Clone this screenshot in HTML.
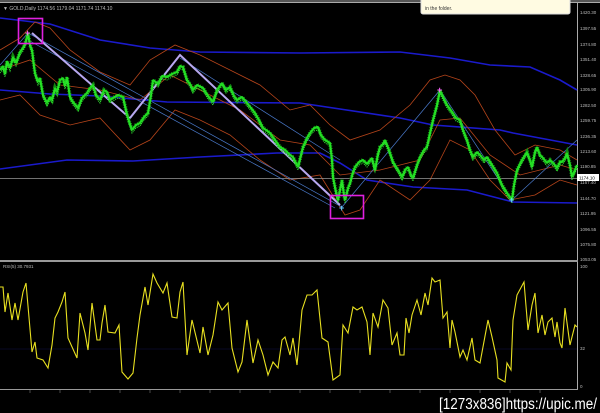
<!DOCTYPE html>
<html><head><meta charset="utf-8"><style>
html,body{margin:0;padding:0;background:#000;width:600px;height:413px;overflow:hidden}
svg{display:block}
text{font-family:"Liberation Sans",sans-serif}
</style></head><body>
<svg width="600" height="413" viewBox="0 0 600 413" xmlns="http://www.w3.org/2000/svg">
<defs>
<polyline id="pr" points="0,70 3,66 5,74 7,61 10,68 13,57 16,63 20,52 23,48 25,44 28,33 30,45 32,50 34,66 35,73 38,82 40,78 43,95 47,103 50,97 52,100 55,88 57,92 60,80 63,78 65,86 67,77 70,97 73,102 78,108 82,98 87,93 90,88 93,85 96,95 100,100 104,90 107,92 110,100 113,98 118,95 123,97 126,110 128,118 132,130 136,125 140,123 144,117 148,113 151,95 153,80 158,84 162,76 167,77 172,74 177,72 180,66 183,67 187,80 190,84 193,90 197,85 203,88 208,96 213,102 217,90 222,83 226,90 230,87 234,96 237,100 242,97 247,103 251,108 255,113 259,120 263,128 266,130 270,133 275,140 280,147 285,150 290,155 293,157 296,163 298,167 301,155 303,147 307,138 310,133 314,128 318,127 321,135 325,140 330,143 332,160 333,177 336,192 338,200 340,190 342,180 344,195 345,200 348,188 350,183 353,172 355,167 359,162 363,160 367,164 372,158 375,170 378,154 380,147 383,144 385,140 389,150 393,162 398,170 402,177 405,170 408,167 411,175 413,178 417,165 420,157 424,150 427,147 430,133 433,120 437,105 440,90 443,97 447,105 452,112 456,118 460,120 463,130 467,140 470,150 473,157 477,152 480,155 484,160 487,157 492,165 497,173 502,185 507,193 512,200 514,185 517,170 522,160 527,152 530,160 532,167 535,152 537,147 540,155 543,158 547,163 550,160 554,164 557,168 560,162 562,162 565,158 567,153 570,165 572,177 575,170 577,165"/>
</defs>
<rect width="600" height="413" fill="#000"/>
<rect x="0" y="0" width="600" height="2" fill="#555"/>
<rect x="0" y="2" width="600" height="1" fill="#aaa"/>
<text x="3" y="10" font-size="5" fill="#bbb">▼ GOLD,Daily 1174.56 1179.04 1171.74 1174.10</text>
<line x1="577.5" y1="3" x2="577.5" y2="390" stroke="#aaa" stroke-width="1"/>
<g font-size="4.5" fill="#bbb">
<text x="580" y="14">1420.30</text><text x="580" y="30">1397.55</text><text x="580" y="46">1374.80</text><text x="580" y="61">1351.40</text><text x="580" y="77">1328.65</text><text x="580" y="91">1305.90</text><text x="580" y="107">1282.50</text><text x="580" y="122">1259.75</text><text x="580" y="138">1236.35</text><text x="580" y="153">1213.60</text><text x="580" y="168">1190.85</text><text x="580" y="184">1167.40</text><text x="580" y="200">1144.70</text><text x="580" y="215">1121.95</text><text x="580" y="231">1096.55</text><text x="580" y="246">1075.80</text><text x="580" y="261">1053.05</text>
<text x="580" y="268">100</text><text x="580" y="350">32</text><text x="580" y="388">0</text>
</g>
<g fill="none" stroke="#1a1acc" stroke-width="1.6">
<polyline points="0,18 50,24 100,40 150,48 200,52 300,53 400,52 450,58 490,65 530,67 560,80 577,90"/>
<polyline points="0,90 50,94 100,96 167,102 300,103 400,118 433,125 500,130 513,133 577,145"/>
<polyline points="0,169 67,160 133,161 200,157 277,153 320,153 340,163 367,180 413,187 467,190 513,202 577,203"/>
</g>
<g fill="none" stroke="#b5441a" stroke-width="0.8">
<polyline points="0,50 20,38 35,22 50,28 70,50 100,72 130,85 150,60 175,45 200,55 230,70 260,85 290,110 310,105 330,125 350,140 380,130 410,105 430,80 445,75 460,80 475,95 495,130 515,155 535,145 560,150 577,160"/>
<polyline points="0,100 20,95 40,115 70,125 100,118 130,150 150,140 175,110 200,120 230,135 260,160 290,180 320,175 345,215 360,210 380,180 410,200 430,180 450,140 470,150 490,180 510,200 535,195 560,180 577,185"/>
<polyline points="0,70 30,60 60,85 100,90 140,100 170,75 200,90 240,110 280,140 310,145 340,175 380,170 420,160 440,120 460,118 490,155 520,175 560,165 577,170"/>
</g>
<line x1="0" y1="178.5" x2="577" y2="178.5" stroke="#999" stroke-width="0.8"/>
<rect x="577" y="174" width="22" height="7" fill="#fff"/>
<text x="579" y="179.5" font-size="4.5" fill="#000">1174.10</text>
<g fill="none" stroke="#4a7acc" stroke-width="0.7">
<polyline points="0,65 28,33 342,207 440,90 512,200 577,140"/>
<line x1="28" y1="40" x2="335" y2="208"/>
<line x1="180" y1="58" x2="340" y2="160"/>
</g>
<polyline points="32,33 130,118 180,55 340,205" fill="none" stroke="#b8a8f0" stroke-width="2"/>
<use href="#pr" fill="none" stroke="#118811" stroke-width="4" stroke-dasharray="1 1.5"/>
<use href="#pr" fill="none" stroke="#22dd22" stroke-width="2.2" stroke-linejoin="bevel"/>
<use href="#pr" transform="translate(0,3)" fill="none" stroke="#33ee33" stroke-width="1" stroke-dasharray="1 1"/>
<rect x="18.5" y="18.5" width="24" height="25" fill="none" stroke="#e020e0" stroke-width="1.6"/>
<rect x="330.5" y="195.5" width="33" height="23" fill="none" stroke="#e020e0" stroke-width="1.6"/>
<text x="25" y="36" font-size="9" fill="#ff66ff" font-weight="bold">+</text>
<text x="437" y="93" font-size="9" fill="#ff66ff" font-weight="bold">+</text>
<text x="339" y="211" font-size="9" fill="#66ccff" font-weight="bold">+</text>
<text x="509" y="203" font-size="9" fill="#66ccff" font-weight="bold">+</text>
<rect x="421" y="-2" width="149" height="16" rx="2" fill="#fffbe2" stroke="#ddd"/>
<text x="425" y="10" font-size="5" fill="#333">in the folder.</text>
<rect x="0" y="260" width="578" height="2" fill="#999"/>
<text x="3" y="268" font-size="4.5" fill="#bbb">RSI(5) 30.7931</text>
<line x1="0" y1="349" x2="577" y2="349" stroke="#10104a" stroke-width="0.6"/>
<polyline fill="none" stroke="#e8e020" stroke-width="1.1" points="0,287 3,287 5,312 8,293 12,320 15,303 18,320 23,292 26,283 32,352 35,342 37,358 43,360 48,368 52,345 55,318 58,312 62,302 65,292 68,338 77,358 80,313 85,333 88,350 92,303 97,340 100,340 102,323 105,305 108,332 115,333 119,325 122,372 128,379 133,373 137,338 140,315 145,287 148,305 153,274 157,283 163,293 167,283 172,317 177,318 180,292 183,282 187,355 192,320 200,353 203,327 208,355 213,335 218,302 222,310 228,303 232,348 238,372 242,362 247,320 253,363 258,340 263,355 268,375 273,362 278,368 282,340 285,337 290,355 293,338 297,365 302,310 307,295 312,295 317,290 322,338 328,342 333,380 340,375 343,325 348,333 353,307 357,310 362,307 367,322 370,355 373,313 378,327 383,300 388,308 392,345 397,333 400,355 404,355 406,318 409,333 412,315 417,300 421,315 425,293 428,305 432,278 435,282 440,280 443,318 447,312 450,348 452,320 455,332 460,357 463,350 467,360 472,338 475,360 480,363 488,320 492,337 497,360 498,378 505,382 507,363 511,370 513,320 517,295 524,282 528,330 532,305 535,293 538,333 542,315 545,335 548,322 552,318 555,337 557,322 560,343 562,348 565,308 570,345 575,325 577,327"/>
<line x1="0" y1="389.5" x2="578" y2="389.5" stroke="#999" stroke-width="1"/>
<g stroke="#777" stroke-width="0.6">
<line x1="30" y1="390" x2="30" y2="393"/><line x1="60" y1="390" x2="60" y2="393"/><line x1="90" y1="390" x2="90" y2="393"/><line x1="120" y1="390" x2="120" y2="393"/><line x1="150" y1="390" x2="150" y2="393"/><line x1="180" y1="390" x2="180" y2="393"/><line x1="210" y1="390" x2="210" y2="393"/><line x1="240" y1="390" x2="240" y2="393"/><line x1="270" y1="390" x2="270" y2="393"/><line x1="300" y1="390" x2="300" y2="393"/><line x1="330" y1="390" x2="330" y2="393"/><line x1="360" y1="390" x2="360" y2="393"/><line x1="390" y1="390" x2="390" y2="393"/><line x1="420" y1="390" x2="420" y2="393"/><line x1="450" y1="390" x2="450" y2="393"/><line x1="480" y1="390" x2="480" y2="393"/><line x1="510" y1="390" x2="510" y2="393"/><line x1="540" y1="390" x2="540" y2="393"/>
</g>
<text x="439" y="409" font-size="15.5" fill="#fff" textLength="158" lengthAdjust="spacingAndGlyphs">[1273x836]https://upic.me/</text>
</svg>
</body></html>
